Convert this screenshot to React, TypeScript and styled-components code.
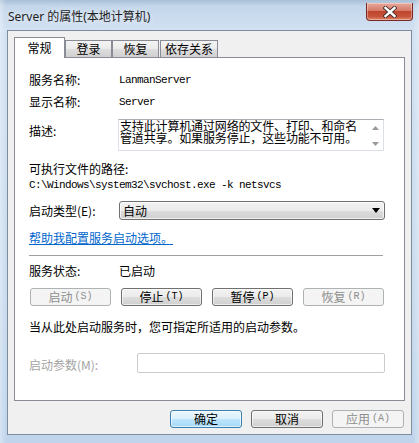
import React from "react";
import styled, { createGlobalStyle } from "styled-components";

const Global = createGlobalStyle`
  html, body { margin: 0; padding: 0; }
  body { font-family: "Noto Sans CJK SC", "Noto Sans", sans-serif; font-size: 12px; color: #000; }
`;

const WindowFrame = styled.div`
  width: 419px;
  height: 443px;
  display: flex;
  flex-direction: column;
  box-sizing: border-box;
  background:
    linear-gradient(90deg, rgba(255,255,255,0.35) 0px, rgba(255,255,255,0) 6px, rgba(255,255,255,0) 413px, rgba(255,255,255,0.3) 419px),
    linear-gradient(180deg, #a9bfd6 0px, #c3d6ea 6px, #d2e1f2 30px, #cadcef 60%, #c0d5ec 100%);
  overflow: hidden;
`;

const TitleBar = styled.div`
  height: 30px;
  flex: none;
  display: flex;
  justify-content: space-between;
  align-items: flex-start;
  padding: 0 6px 0 8px;
  box-sizing: border-box;
`;

const TitleText = styled.div`
  margin-top: 10px;
  line-height: 14px;
  font-family: "Noto Sans", "Noto Sans CJK SC", sans-serif;
  font-size: 12px;
  color: #1e1e1e;
  text-shadow: 0 0 6px rgba(255,255,255,0.9);
`;

const CloseButton = styled.div`
  margin-top: 3px;
  width: 47px;
  height: 18px;
  box-sizing: border-box;
  border: 1px solid #7a2a22;
  border-top: none;
  border-radius: 0 0 4px 4px;
  background: linear-gradient(180deg, #e9a99c 0%, #d47a68 45%, #c0452f 50%, #c8543c 80%, #dd8b6f 100%);
  box-shadow: inset 0 0 0 1px rgba(255,255,255,0.35);
  display: flex;
  align-items: center;
  justify-content: center;
`;

const Client = styled.div`
  margin: 0 7px;
  height: 405px;
  box-sizing: border-box;
  background: #f0f0f0;
  border: 1px solid #7e8c9c;
  padding: 7px 6px 0 6px;
  display: flex;
  flex-direction: column;
`;

const TabStrip = styled.div`
  display: flex;
  align-items: flex-end;
  height: 20px;
  position: relative;
  z-index: 1;
  margin-bottom: -1px;
`;

const Tab = styled.div<{ $active?: boolean; $w: number; $ml?: number }>`
  width: ${(p) => p.$w}px;
  margin-left: ${(p) => p.$ml ?? 0}px;
  height: ${(p) => (p.$active ? 21 : 18)}px;
  box-sizing: border-box;
  border: 1px solid #898c95;
  border-bottom: ${(p) => (p.$active ? "none" : "1px solid #898c95")};
  background: ${(p) =>
    p.$active ? "#ffffff" : "linear-gradient(180deg, #f3f3f3 0%, #ebebeb 50%, #dedede 51%, #d0d0d0 100%)"};
  display: flex;
  align-items: flex-start;
  justify-content: center;
  padding-top: ${(p) => (p.$active ? 3 : 1)}px;
  line-height: 14px;
  font-size: 12px;
`;

const Panel = styled.div`
  width: 391px;
  height: 344px;
  box-sizing: border-box;
  background: #ffffff;
  border: 1px solid #898c95;
  padding: 15px 18px 0 14px;
  display: flex;
  flex-direction: column;
`;

const InfoRow = styled.div<{ $mt?: number; $col?: number; $start?: boolean }>`
  display: grid;
  grid-template-columns: ${(p) => p.$col ?? 90}px 1fr;
  align-items: ${(p) => (p.$start ? "start" : "center")};
  margin-top: ${(p) => p.$mt ?? 0}px;
  line-height: 14px;
`;

const Label = styled.div<{ $mt?: number; $disabled?: boolean }>`
  line-height: 14px;
  margin-top: ${(p) => p.$mt ?? 0}px;
  color: ${(p) => (p.$disabled ? "#a3a3a3" : "#000")};
  white-space: nowrap;
`;

const Mono = styled.div<{ $mt?: number }>`
  font-family: "Liberation Mono", "Courier New", monospace;
  font-size: 11px;
  letter-spacing: -0.6px;
  line-height: 14px;
  margin-top: ${(p) => p.$mt ?? 0}px;
  white-space: nowrap;
`;

const DescBox = styled.div`
  margin-left: -1px;
  width: 266px;
  height: 32px;
  box-sizing: border-box;
  border: 1px solid #dbdfe6;
  border-top-color: #abadb3;
  border-left-color: #e2e3ea;
  background: #fff;
  display: flex;
`;

const DescText = styled.div`
  flex: 1;
  padding: 0 0 0 1px;
  line-height: 12px;
  font-size: 12px;
  letter-spacing: -0.15px;
`;

const ScrollBar = styled.div`
  width: 16px;
  flex: none;
  display: flex;
  flex-direction: column;
  justify-content: space-between;
  align-items: center;
  padding: 6px 0 4px;
`;

const Select = styled.div`
  width: 266px;
  height: 19px;
  box-sizing: border-box;
  border: 1px solid #707070;
  border-radius: 3px;
  background: linear-gradient(180deg, #f2f2f2 0%, #ebebeb 50%, #dddddd 51%, #cfcfcf 100%);
  box-shadow: inset 0 0 0 1px rgba(255,255,255,0.7);
  display: flex;
  align-items: center;
  justify-content: space-between;
  padding: 0 4px 0 3px;
  line-height: 14px;
`;

const Link = styled.a`
  margin-top: 11px;
  line-height: 14px;
  color: #0066cc;
  text-decoration: underline;
  align-self: flex-start;
  cursor: pointer;
`;

const Separator = styled.div`
  margin: 10px 3px 0 0;
  height: 1px;
  background: #a0a0a0;
`;

const ButtonRow = styled.div<{ $mt?: number }>`
  display: flex;
  gap: 10px;
  margin-top: ${(p) => p.$mt ?? 0}px;
  margin-left: 1px;
`;

const Button = styled.div<{ $w?: number; $disabled?: boolean; $default?: boolean }>`
  width: ${(p) => p.$w ?? 81}px;
  height: 18px;
  box-sizing: border-box;
  border: 1px solid ${(p) => (p.$disabled ? "#adb2b5" : p.$default ? "#3c7fb1" : "#707070")};
  border-radius: 3px;
  background: ${(p) =>
    p.$disabled
      ? "#f4f4f4"
      : p.$default
      ? "linear-gradient(180deg, #eaf6fd 0%, #d9f0fc 50%, #bee6fd 51%, #a7d9f5 100%)"
      : "linear-gradient(180deg, #f2f2f2 0%, #ebebeb 50%, #dddddd 51%, #cfcfcf 100%)"};
  box-shadow: ${(p) => (p.$disabled ? "none" : "inset 0 0 0 1px rgba(255,255,255,0.6)")};
  color: ${(p) => (p.$disabled ? "#8d8d8d" : "#000")};
  display: flex;
  align-items: center;
  justify-content: center;
  line-height: 14px;
  font-size: 12px;
  white-space: nowrap;
`;

const Accel = styled.span`
  font-family: "Liberation Mono", monospace;
  font-size: 10px;
  margin-left: 2px;
`;

const ParamInput = styled.div`
  width: 248px;
  height: 20px;
  box-sizing: border-box;
  border: 1px solid #c9cbcf;
  border-radius: 2px;
  background: #fff;
`;

const Footer = styled.div`
  display: flex;
  justify-content: flex-end;
  gap: 9px;
  margin-top: 9px;
  padding-right: 1px;
`;

const Btn = ({ text, acc, ...rest }: { text: string; acc?: string; $w?: number; $disabled?: boolean; $default?: boolean }) => (
  <Button {...rest}>
    {text}
    {acc && <Accel>({acc})</Accel>}
  </Button>
);

export default function App() {
  return (
    <>
      <Global />
      <WindowFrame>
        <TitleBar>
          <TitleText>Server 的属性(本地计算机)</TitleText>
          <CloseButton>
            <svg width="14" height="12" viewBox="0 0 14 12">
              <path d="M2.5 2 L11.5 10 M11.5 2 L2.5 10" stroke="#3a2624" strokeWidth="4.2" strokeLinecap="square" />
              <path d="M2.5 2 L11.5 10 M11.5 2 L2.5 10" stroke="#ffffff" strokeWidth="2.4" strokeLinecap="square" />
            </svg>
          </CloseButton>
        </TitleBar>
        <Client>
          <TabStrip>
            <Tab $active $w={51}>常规</Tab>
            <Tab $w={47}>登录</Tab>
            <Tab $w={47} $ml={0}>恢复</Tab>
            <Tab $w={58} $ml={1}>依存关系</Tab>
          </TabStrip>
          <Panel>
            <InfoRow>
              <Label>服务名称:</Label>
              <Mono>LanmanServer</Mono>
            </InfoRow>
            <InfoRow $mt={8}>
              <Label>显示名称:</Label>
              <Mono>Server</Mono>
            </InfoRow>
            <InfoRow $mt={10} $start>
              <Label $mt={5}>描述:</Label>
              <DescBox>
                <DescText>支持此计算机通过网络的文件、打印、和命名管道共享。如果服务停止，这些功能不可用。</DescText>
                <ScrollBar>
                  <svg width="7" height="4" viewBox="0 0 7 4"><path d="M3.5 0 L7 4 L0 4 Z" fill="#9a9a9a" /></svg>
                  <svg width="7" height="4" viewBox="0 0 7 4"><path d="M0 0 L7 0 L3.5 4 Z" fill="#9a9a9a" /></svg>
                </ScrollBar>
              </DescBox>
            </InfoRow>
            <Label $mt={11}>可执行文件的路径:</Label>
            <Mono $mt={2}>C:\Windows\system32\svchost.exe -k netsvcs</Mono>
            <InfoRow $mt={9}>
              <Label>启动类型(E):</Label>
              <Select>
                <span>自动</span>
                <svg width="8" height="5" viewBox="0 0 8 5"><path d="M0 0 L8 0 L4 5 Z" fill="#000" /></svg>
              </Select>
            </InfoRow>
            <Link>帮助我配置服务启动选项。</Link>
            <Separator />
            <InfoRow $mt={8}>
              <Label>服务状态:</Label>
              <Label>已启动</Label>
            </InfoRow>
            <ButtonRow $mt={10}>
              <Btn text="启动" acc="S" $disabled />
              <Btn text="停止" acc="T" />
              <Btn text="暂停" acc="P" />
              <Btn text="恢复" acc="R" $disabled />
            </ButtonRow>
            <Label $mt={14}>当从此处启动服务时，您可指定所适用的启动参数。</Label>
            <InfoRow $mt={19} $col={108}>
              <Label $disabled $mt={3}>启动参数(M):</Label>
              <ParamInput />
            </InfoRow>
          </Panel>
          <Footer>
            <Btn text="确定" $w={72} $default />
            <Btn text="取消" $w={72} />
            <Btn text="应用" acc="A" $w={72} $disabled />
          </Footer>
        </Client>
      </WindowFrame>
    </>
  );
}
